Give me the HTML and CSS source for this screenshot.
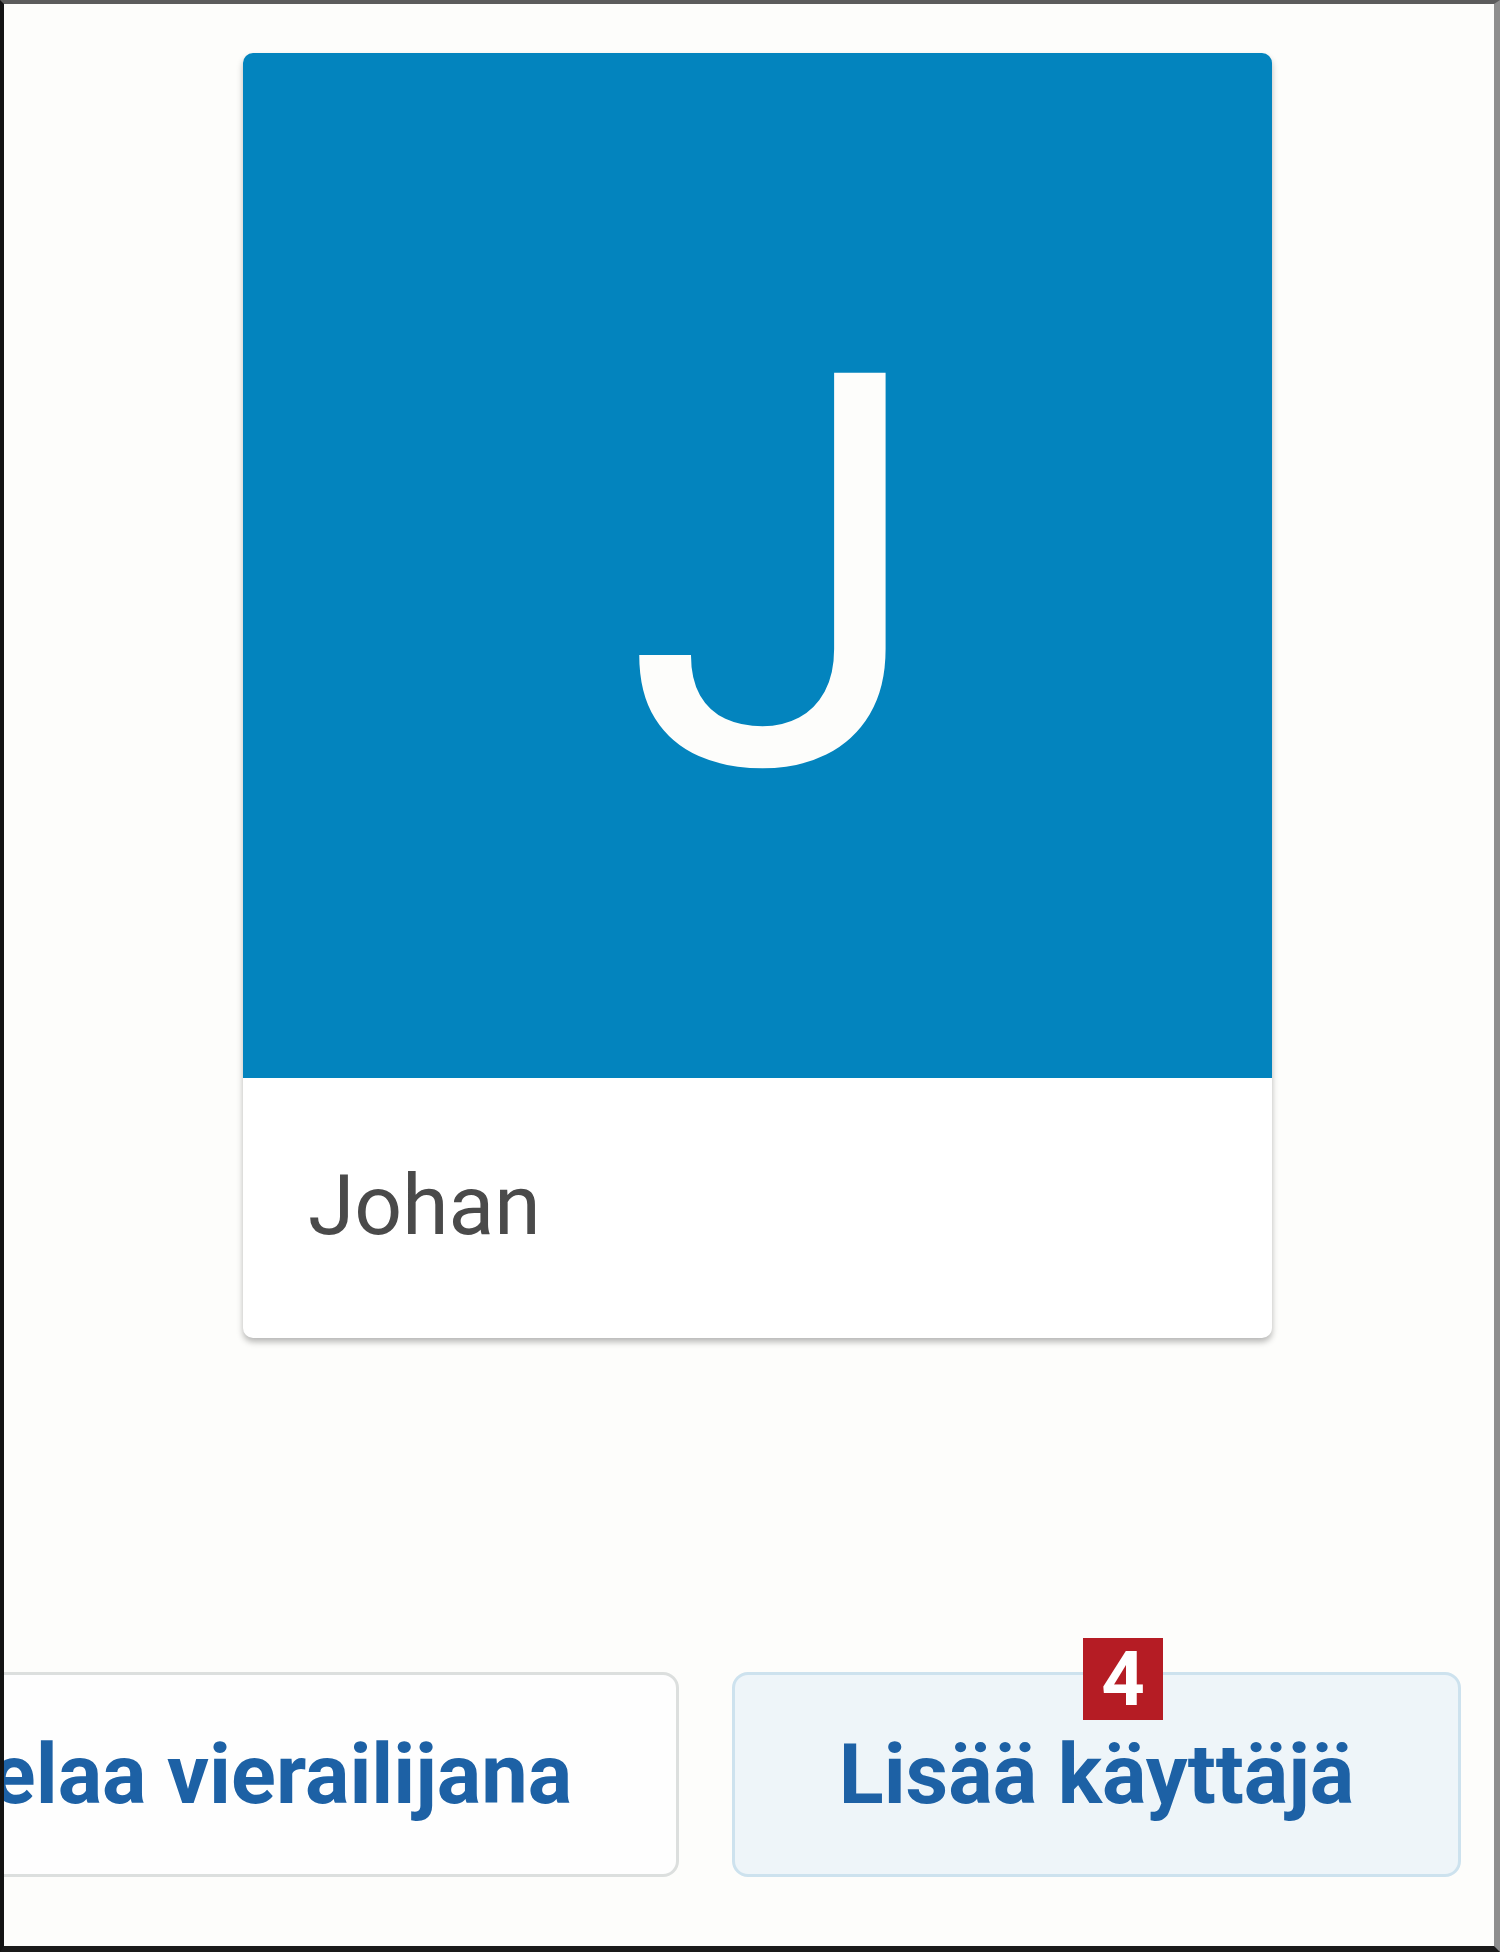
FILE: index.html
```html
<!DOCTYPE html>
<html lang="fi">
<head>
  <meta charset="UTF-8">
  <meta name="viewport" content="width=device-width, initial-scale=1.0">
  <title>Valitse käyttäjä</title>
  <link rel="stylesheet" href="styles.css">
</head>
<body>
  <div class="screen">
    <!-- Profiilit -->
    <div class="profiles">
      <div class="profile-card">
        <div class="avatar">J</div>
        <div class="profile-name">Johan</div>
      </div>
    </div>

    <!-- Toiminnot -->
    <div class="actions">
      <button type="button" class="btn btn-guest">Selaa vierailijana</button>
      <button type="button" class="btn btn-add">
        Lisää käyttäjä
        <span class="badge">4</span>
      </button>
    </div>
  </div>
</body>
</html>
```

FILE: styles.css
```css
body {
  margin: 0;
  padding: 0;
  background-color: #fdfdfb;
  font-family: 'Roboto', 'Liberation Sans', sans-serif;
}

.screen {
  width: 1500px;
  height: 1952px;
  box-sizing: border-box;
  border-top: 4px solid #5c5c5c;
  border-left: 4px solid #141414;
  border-right: 6px solid #8e8e8e;
  border-bottom: 6px solid #1a1a1a;
  background-color: #fdfdfb;
  overflow: hidden;
}

.profiles {
  display: flex;
  padding-top: 49px;
  padding-left: 239px;
}

.profile-card {
  width: 1029px;
  background: #ffffff;
  border-radius: 10px;
  box-shadow: 0 4px 6px rgba(0, 0, 0, 0.28);
  overflow: hidden;
}

.avatar {
  height: 1025px;
  box-sizing: border-box;
  padding-top: 20px;
  padding-left: 38px;
  background-color: #0384be;
  color: #fdfdfb;
  font-size: 549px;
  line-height: 1;
  display: flex;
  justify-content: center;
  align-items: center;
}

.profile-name {
  height: 260px;
  line-height: 256px;
  padding-left: 65px;
  font-size: 84px;
  color: #4a4a4a;
}

.actions {
  display: flex;
  justify-content: flex-end;
  gap: 53px;
  margin-top: 334px;
  padding-right: 33px;
}

.btn {
  flex-shrink: 0;
  height: 205px;
  border-radius: 16px;
  font-family: 'Roboto', 'Liberation Sans', sans-serif;
  font-size: 83px;
  font-weight: bold;
  color: #1d61a5;
  padding: 0;
  cursor: pointer;
}

.btn-guest {
  width: 846px;
  background-color: #fefefe;
  border: 3px solid #dcdfde;
}

.btn-add {
  width: 729px;
  position: relative;
  background-color: #eef5f9;
  border: 3px solid #cde2ee;
}

.badge {
  position: absolute;
  top: -37px;
  left: 348px;
  width: 80px;
  height: 82px;
  background-color: #b51c24;
  color: #ffffff;
  font-size: 76px;
  line-height: 82px;
  text-align: center;
}
```
